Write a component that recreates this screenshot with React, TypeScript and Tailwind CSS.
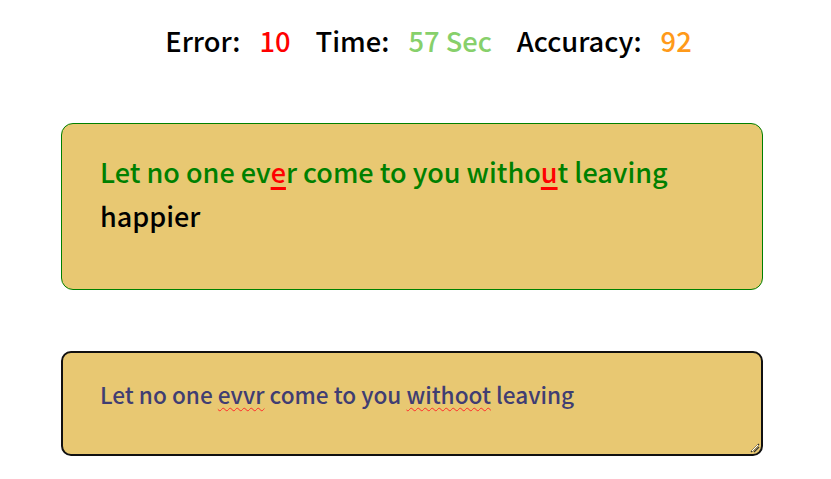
const font = { fontFamily: '"Noto Sans CJK JP", "Noto Sans", sans-serif' };

function Stat({ label, value, color }: { label: string; value: string; color: string }) {
  return (
    <div className="flex items-baseline gap-[19px]">
      <span className="text-black">{label}</span>
      <span className={color}>{value}</span>
    </div>
  );
}

export default function App() {
  return (
    <main className="min-h-[479px] w-[831px] bg-white font-medium" style={font}>
      <div className="flex justify-center gap-[25px] pt-[21px] pl-[26px] text-[27.3px] leading-[38px]">
        <Stat label="Error:" value="10" color="text-[#ff0000]" />
        <Stat label="Time:" value="57 Sec" color="text-[#87d06b]" />
        <Stat label="Accuracy:" value="92" color="text-[#ff9a1a]" />
      </div>

      <div className="ml-[61px] mt-[64px] h-[167px] w-[702px] rounded-[12px] border border-[#008000] bg-[#e8c872] px-[38px] pt-[26px] text-[27px] leading-[44px]">
        <span className="text-[#008000]">
          Let no one ev<span className="text-[#ff0000] underline decoration-[3px] underline-offset-[4px]">e</span>r come to you witho
          <span className="text-[#ff0000] underline decoration-[3px] underline-offset-[4px]">u</span>t leaving
        </span>{" "}
        <span className="text-black">happier</span>
      </div>

      <div className="relative ml-[61px] mt-[61px] h-[105px] w-[702px] rounded-[10px] border-2 border-[#111] bg-[#e8c872] px-[37px] pt-[28px] text-[22.6px] leading-[28px] text-[#403d72]">
        Let no one{" "}
        <span className="underline decoration-wavy decoration-[#ff2a2a] decoration-[1px] underline-offset-[3px]">evvr</span> come to you{" "}
        <span className="underline decoration-wavy decoration-[#ff2a2a] decoration-[1px] underline-offset-[3px]">withoot</span> leaving
        <svg className="absolute bottom-[1px] right-[1px]" width="12" height="12" viewBox="0 0 12 12">
          <path d="M11 3 L3 11" stroke="#333" strokeWidth="1.2" />
          <path d="M11 6 L6 11" stroke="#333" strokeWidth="1.2" />
          <path d="M10 4 L4 10" stroke="#fff" strokeWidth="1" />
        </svg>
      </div>
    </main>
  );
}
